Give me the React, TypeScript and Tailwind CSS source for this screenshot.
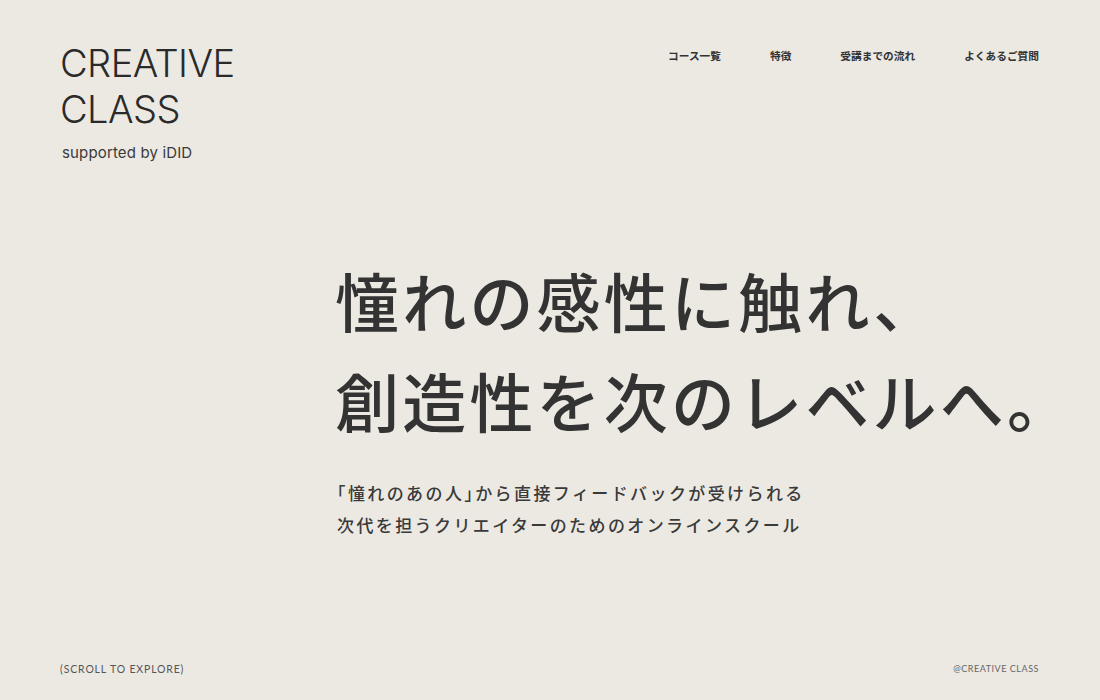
import React from "react";

export default function App() {
  const jp = { fontFamily: '"Noto Sans CJK JP", "Noto Sans", sans-serif' };
  const latin = { fontFamily: 'Inter, "Liberation Sans", sans-serif' };
  return (
    <div className="w-[1100px] h-[700px] bg-[#ece9e3] text-[#333333] flex flex-col overflow-hidden" style={jp}>
      <header className="flex justify-between pl-[60px] pr-[61px] pt-[40px]">
        <div className="flex flex-col">
          <div className="text-[38px] leading-[46px] font-light tracking-[-0.015em] text-[#2a2a2a]" style={latin}>
            <div>CREATIVE</div>
            <div>CLASS</div>
          </div>
          <div className="mt-[11px] ml-[2px] text-[15px] leading-[20px] tracking-[0.01em] text-[#3a3a3a]" style={latin}>supported by iDID</div>
        </div>
        <nav className="flex gap-[49px] pt-[8px] text-[10.7px] font-bold leading-[16px] text-[#333]">
          <span>コース一覧</span>
          <span>特徴</span>
          <span>受講までの流れ</span>
          <span>よくあるご質問</span>
        </nav>
      </header>
      <main className="flex-1 pl-[335px] pt-[86px]">
        <h1 className="text-[64px] leading-[100px] font-medium tracking-[3.2px] text-[#333]">
          <div>憧れの感性に触れ、</div>
          <div>創造性を次のレベルへ。</div>
        </h1>
        <p className="mt-[28px] ml-[2px] text-[17px] leading-[32px] tracking-[2.4px] font-medium text-[#3a3a3a]">
          <span className="block">
            <span className="[font-feature-settings:'halt']">「</span>憧れのあの人<span className="[font-feature-settings:'halt']">」</span>から直接フィードバックが受けられる
          </span>
          <span className="block">次代を担うクリエイターのためのオンラインスクール</span>
        </p>
      </main>
      <footer className="flex justify-between items-end pl-[60px] pr-[61px] pb-[25px]" style={{ fontFamily: 'Lato, "Open Sans", sans-serif' }}>
        <span className="text-[10.5px] leading-[12px] tracking-[0.08em] text-[#555]">(SCROLL TO EXPLORE)</span>
        <span className="text-[9px] leading-[12px] tracking-[0.06em] text-[#666]">@CREATIVE CLASS</span>
      </footer>
    </div>
  );
}
